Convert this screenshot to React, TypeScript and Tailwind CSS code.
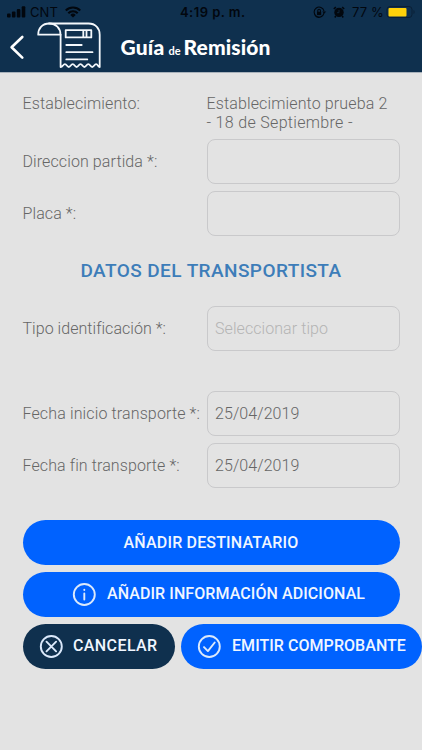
import type { ReactNode } from "react";

const inputClass =
  "h-[45px] w-[193px] shrink-0 rounded-[8px] border border-[#c9c9cb] bg-transparent pl-[7.5px] pb-[1px] font-light text-[16px] tracking-[0.07px] text-[#666666] outline-none placeholder:text-[#b4b4b4] placeholder:opacity-100";

function Field({ label, labelClass, children }: { label: string; labelClass: string; children: ReactNode }) {
  return (
    <div className="flex h-[45px] items-center">
      <label className={`w-[184px] shrink-0 whitespace-nowrap pt-[2px] ${labelClass}`}>{label}</label>
      {children}
    </div>
  );
}

function StatusBar() {
  return (
    <div className="flex h-[24px] items-center text-[#02070e]">
      <svg className="ml-[7px] shrink-0" width="19" height="12" viewBox="0 0 19 12" fill="currentColor">
        <rect x="0" y="7.5" width="3.6" height="4" rx="1" />
        <rect x="4.9" y="5.5" width="3.6" height="6" rx="1" />
        <rect x="9.8" y="3" width="3.6" height="8.5" rx="1" />
        <rect x="14.7" y="0.3" width="3.6" height="11.2" rx="1" />
      </svg>
      <span className="ml-[4px] w-[34px] shrink-0 text-[13px] font-['Inter','Liberation_Sans',sans-serif] font-normal">CNT</span>
      <svg className="ml-[1px] shrink-0" width="16" height="12" viewBox="0 0 16 12" fill="none" stroke="currentColor" strokeWidth="2.1">
        <path d="M.8 4.5a10.2 10.2 0 0 1 14.4 0" />
        <path d="M3.3 7.2a6.6 6.6 0 0 1 9.4 0" />
        <path d="M8 11.5 5.3 8.9a3.8 3.8 0 0 1 5.4 0Z" fill="currentColor" stroke="none" />
      </svg>
      <span className="ml-[99px] w-[66px] shrink-0 whitespace-nowrap text-[13px] tracking-[0.45px] font-semibold font-['Inter','Liberation_Sans',sans-serif]">4:19 p. m.</span>
      <svg className="ml-[67px] shrink-0" width="14" height="13" viewBox="0 0 14 13" fill="none" stroke="currentColor" strokeWidth="1.1">
        <path d="M11 7.2A5 5 0 1 1 11 5M9 10.4a5 5 0 0 1-7-1" />
        <path d="m9.8 5.7 1.3 1.6 1.5-1.6Z" fill="currentColor" strokeWidth=".5" />
        <rect x="4" y="5.8" width="4.2" height="3.3" fill="currentColor" stroke="none" />
        <path d="M4.8 6V4.5a1.3 1.3 0 0 1 2.6 0V6" />
      </svg>
      <svg className="ml-[6px] shrink-0" width="12" height="12" viewBox="0 0 12 12">
        <circle cx="6" cy="6.4" r="4.7" fill="currentColor" />
        <path d="m.8 3 2-1.9M11.2 3l-2-1.9M2.8 10l-1 1.5M9.2 10l1 1.5" stroke="currentColor" strokeWidth="1.5" />
        <path d="M6 3.9v2.8H4" fill="none" stroke="#0f304e" strokeWidth=".7" />
      </svg>
      <span className="ml-[7px] w-[33px] shrink-0 whitespace-nowrap text-[13px] font-['Inter','Liberation_Sans',sans-serif] font-normal">77 %</span>
      <svg className="ml-[1px] shrink-0" width="30" height="14" viewBox="0 0 30 14">
        <rect x="1" y="1.5" width="25" height="11" rx="3" fill="none" stroke="#0a1f35" strokeWidth="1" />
        <rect x="2.5" y="3" width="18" height="8.5" rx="1" fill="#ffd20a" />
        <path d="M27.5 5c1.5.8 1.5 3.2 0 4Z" fill="#0a1f35" />
      </svg>
    </div>
  );
}

function ReceiptLogo() {
  return (
    <svg className="ml-[12px] shrink-0" width="66" height="48" viewBox="0 0 66 48" fill="none" stroke="#f4f8fc" strokeWidth="1.8" strokeLinejoin="round" strokeLinecap="round">
      <path d="M1.2 12.7C1.2 6 5.5 1.5 12.2 1.5s11.3 4.8 11.3 11.2Z" />
      <path d="M12 1.5h39.5c6.8 0 11.2 4.6 11.2 11.2V45c-1.6 0-1.8-2.8-3.6-2.8s-2 2.8-3.9 2.8-2-2.8-3.9-2.8-2 2.8-3.9 2.8-2-2.8-3.9-2.8-2 2.8-3.9 2.8-2-2.8-3.9-2.8-2 2.8-3.9 2.8-2-2.8-3.9-2.8-2 2.8-4.3 2.8V12.7" />
      <path d="M28.7 8.2h25.6v7.2H28.7zM46.3 8.2v7.2M49.5 8.2v7.2M29.3 23H44.7M29.3 30.2H55.5M29.3 37.4H50.3" />
    </svg>
  );
}

function CircleIcon({ kind }: { kind: "info" | "close" | "check" }) {
  return (
    <svg className="shrink-0" width="24" height="24" viewBox="0 0 24 24" fill="none" stroke="#dbe9fb" strokeWidth="1.9" strokeLinecap="round" strokeLinejoin="round">
      <circle cx="12.3" cy="11.5" r="10.5" />
      {kind === "info" && <path d="M12.3 10.4v6.2M12.3 6.7v.3" />}
      {kind === "close" && <path d="m7.5 6.7 9.6 9.6M17.1 6.7l-9.6 9.6" />}
      {kind === "check" && <path d="m7 12.1 3.9 4L17.7 7.5" />}
    </svg>
  );
}

export default function App() {
  return (
    <div className="flex h-[750px] w-[422px] flex-col overflow-hidden bg-[#e3e3e3] font-['Roboto','Liberation_Sans',sans-serif] text-[16px] font-light leading-[18.5px] tracking-[0.11px] text-[#666666]">
      <header className="h-[73px] shrink-0 border-b border-[#a9b2bb] bg-[#0f304e]">
        <StatusBar />
        <div className="flex h-[48px] items-start">
          <svg className="ml-[8px] mt-[10px] shrink-0" width="17" height="27" viewBox="0 0 17 27" fill="none" stroke="#fff" strokeWidth="2.6" strokeLinecap="round" strokeLinejoin="round">
            <path d="M14.3 3 3.6 13.3l10.7 10.3" />
          </svg>
          <div className="-mt-[2px] flex">
            <ReceiptLogo />
          </div>
          <h1 className="ml-[17.5px] mt-[10px] flex items-baseline whitespace-nowrap font-['Lato','Liberation_Sans',sans-serif] text-[21px] font-black leading-[26px] text-white">
            <span className="w-[48px] tracking-[0.2px]">Guía</span>
            <span className="w-[15px] text-[11px] font-bold">de</span>
            <span className="tracking-[0.1px]">Remisión</span>
          </h1>
        </div>
      </header>

      <main className="flex flex-col pl-[22.5px] pt-[22px]">
        <div className="flex h-[44px]">
          <span className="w-[184px] shrink-0">Establecimiento:</span>
          <p className="whitespace-nowrap tracking-[0.13px]">
            <span className="block">Establecimiento prueba 2</span>
            <span className="block tracking-[0.32px]">- 18 de Septiembre -</span>
          </p>
        </div>
        <div className="flex flex-col gap-[7px]">
          <Field label="Direccion partida *:" labelClass="tracking-[0.1px]"><input className={inputClass} /></Field>
          <Field label="Placa *:" labelClass="tracking-[0.1px]"><input className={inputClass} /></Field>
        </div>
        <h2 className="mr-[22.5px] mt-[23px] h-[24px] whitespace-nowrap text-center text-[19px] font-medium leading-[24px] tracking-[0.42px] text-[#3d7db9]">DATOS DEL TRANSPORTISTA</h2>
        <div className="mt-[23px]">
          <Field label="Tipo identificación *:" labelClass="tracking-[0.04px]"><input className={inputClass} placeholder="Seleccionar tipo" /></Field>
        </div>
        <div className="mt-[40px] flex flex-col gap-[7px]">
          <Field label="Fecha inicio transporte *:" labelClass="tracking-[0.13px]"><input className={inputClass} defaultValue="25/04/2019" /></Field>
          <Field label="Fecha fin transporte *:" labelClass="tracking-[0.1px]"><input className={inputClass} defaultValue="25/04/2019" /></Field>
        </div>

        <div className="mt-[32px] flex flex-col gap-[7px] whitespace-nowrap text-[16px] font-medium text-[#f0f6ff]">
          <button className="h-[45px] w-[377px] rounded-full bg-[#0062ff] pt-[1px] tracking-[0.17px]">AÑADIR DESTINATARIO</button>
          <button className="flex h-[45px] w-[377px] items-center gap-[11.5px] rounded-full bg-[#0062ff] pl-[49px]">
            <CircleIcon kind="info" />
            <span className="tracking-[0.08px]">AÑADIR INFORMACIÓN ADICIONAL</span>
          </button>
          <div className="flex gap-[6.5px]">
            <button className="flex h-[45px] w-[152px] shrink-0 items-center gap-[10.5px] rounded-full bg-[#0f304e] pl-[16px]">
              <CircleIcon kind="close" />
              <span className="tracking-[0.4px]">CANCELAR</span>
            </button>
            <button className="flex h-[45px] w-[241px] shrink-0 items-center gap-[11px] rounded-full bg-[#0062ff] pl-[16px]">
              <CircleIcon kind="check" />
              <span className="tracking-[0.05px]">EMITIR COMPROBANTE</span>
            </button>
          </div>
        </div>
      </main>
    </div>
  );
}
